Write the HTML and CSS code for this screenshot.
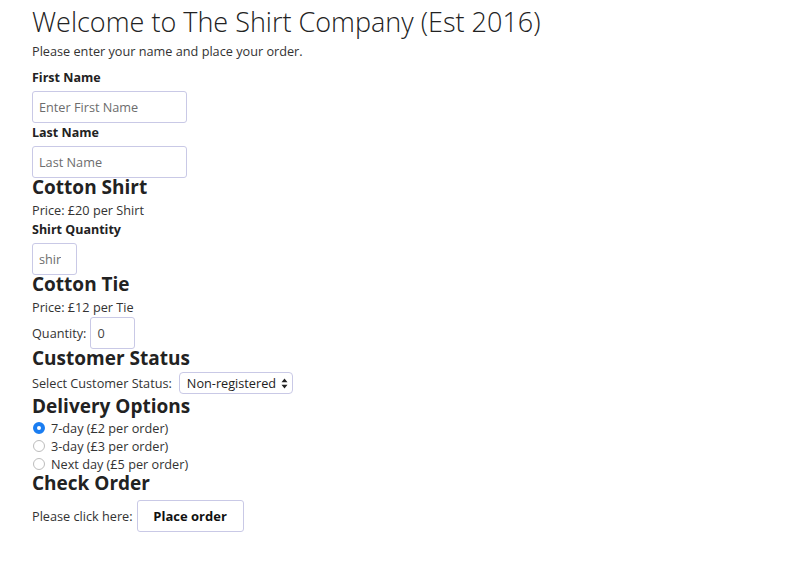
FILE: index.html
```html
<!DOCTYPE html>
<html>
<head>
<meta charset="utf-8">
<link rel="stylesheet" href="styles.css">
</head>
<body>
<main class="page">
  <h1 class="title">Welcome to The Shirt Company (Est 2016)</h1>
  <p class="intro">Please enter your name and place your order.</p>

  <label class="label label-first" for="first">First Name</label>
  <input class="field field-name" id="first" type="text" placeholder="Enter First Name">
  <label class="label" for="last">Last Name</label>
  <input class="field field-name" id="last" type="text" placeholder="Last Name">

  <h3 class="section">Cotton Shirt</h3>
  <p class="text price">Price: £20 per Shirt</p>
  <label class="label" for="shirtqty">Shirt Quantity</label>
  <input class="field field-small field-clip" id="shirtqty" type="text" placeholder="shirt">

  <h3 class="section">Cotton Tie</h3>
  <p class="text price">Price: £12 per Tie</p>
  <div class="row row-qty">
    <span>Quantity:</span>
    <input class="field field-small field-value" type="text" value="0">
  </div>

  <h3 class="section">Customer Status</h3>
  <div class="row row-select">
    <span>Select Customer Status:</span>
    <span class="select">Non-registered<svg class="arrows" width="7" height="11" viewBox="0 0 7 11"><path d="M3.5 0.5 L6.5 4.2 L0.5 4.2 Z M3.5 10.5 L6.5 6.8 L0.5 6.8 Z" fill="#222"/></svg></span>
  </div>

  <h3 class="section">Delivery Options</h3>
  <div class="radios">
    <label class="radio"><span class="dot dot-on"></span>7-day (£2 per order)</label>
    <label class="radio"><span class="dot"></span>3-day (£3 per order)</label>
    <label class="radio"><span class="dot"></span>Next day (£5 per order)</label>
  </div>

  <h3 class="section">Check Order</h3>
  <div class="row row-button">
    <span>Please click here:</span>
    <button class="btn" type="button">Place order</button>
  </div>
</main>
</body>
</html>
```
FILE: styles.css
```css
html, body {
  margin: 0;
  padding: 0;
  background: #fff;
}
body {
  font-family: "Open Sans", "Lato", sans-serif;
  font-size: 12.7px;
  line-height: 18px;
  color: #333;
}
.page {
  padding: 4px 0 0 32px;
  display: flex;
  flex-direction: column;
  align-items: flex-start;
}
.title {
  margin: 0;
  font-size: 27px;
  line-height: 36px;
  font-weight: 300;
  color: #222;
}
.intro {
  margin: 2px 0 0;
}
.label {
  display: block;
  font-weight: 700;
  font-size: 12.5px;
  color: #222;
  margin-top: 1px;
}
.label-first {
  margin-top: 9px;
}
.field {
  box-sizing: border-box;
  height: 32px;
  margin: 4px 0 0;
  border: 1px solid #c9c9e6;
  border-radius: 3px;
  padding: 0 6px;
  font-family: inherit;
  font-size: 12.7px;
  color: #444;
  background: #fff;
  outline: none;
}
.field::placeholder {
  color: #6d6d6d;
}
.field-name {
  width: 155px;
}
.field-small {
  width: 45px;
}
.field-clip {
  padding-right: 15px;
}
.field-value {
  margin: 0 0 0 4px;
  width: 45px;
}
.section {
  margin: -1px 0 0;
  font-size: 19px;
  line-height: 20px;
  font-weight: 700;
  color: #222;
}
.text {
  margin: 0;
}
.price {
  margin-top: 4px;
  margin-bottom: 1px;
}
.row {
  display: flex;
  align-items: center;
}
.row-qty {
  margin-top: 0;
}
.row-select {
  margin-top: 4px;
  margin-bottom: 3px;
}
.select {
  display: inline-flex;
  align-items: center;
  justify-content: space-between;
  box-sizing: border-box;
  width: 114px;
  height: 22px;
  margin-left: 7px;
  padding: 0 4px 0 7px;
  border: 1px solid #c9c9e6;
  border-radius: 4px;
  color: #222;
}
.arrows {
  display: block;
}
.radios {
  margin-top: 3px;
  margin-bottom: 1px;
  display: flex;
  flex-direction: column;
}
.radio {
  display: flex;
  align-items: center;
  height: 18px;
}
.dot {
  box-sizing: border-box;
  width: 12px;
  height: 12px;
  margin: 0 6px 0 1px;
  border-radius: 50%;
  border: 1px solid #bcbcbc;
  background: #fff;
}
.dot-on {
  border: 4px solid #1a7df1;
  background: #fff;
}
.row-button {
  margin-top: 7px;
}
.btn {
  box-sizing: border-box;
  height: 32px;
  width: 107px;
  margin-left: 4px;
  border: 1px solid #c9c9e6;
  border-radius: 3px;
  background: #fff;
  font-family: inherit;
  font-size: 13px;
  font-weight: 700;
  color: #111;
}
```
